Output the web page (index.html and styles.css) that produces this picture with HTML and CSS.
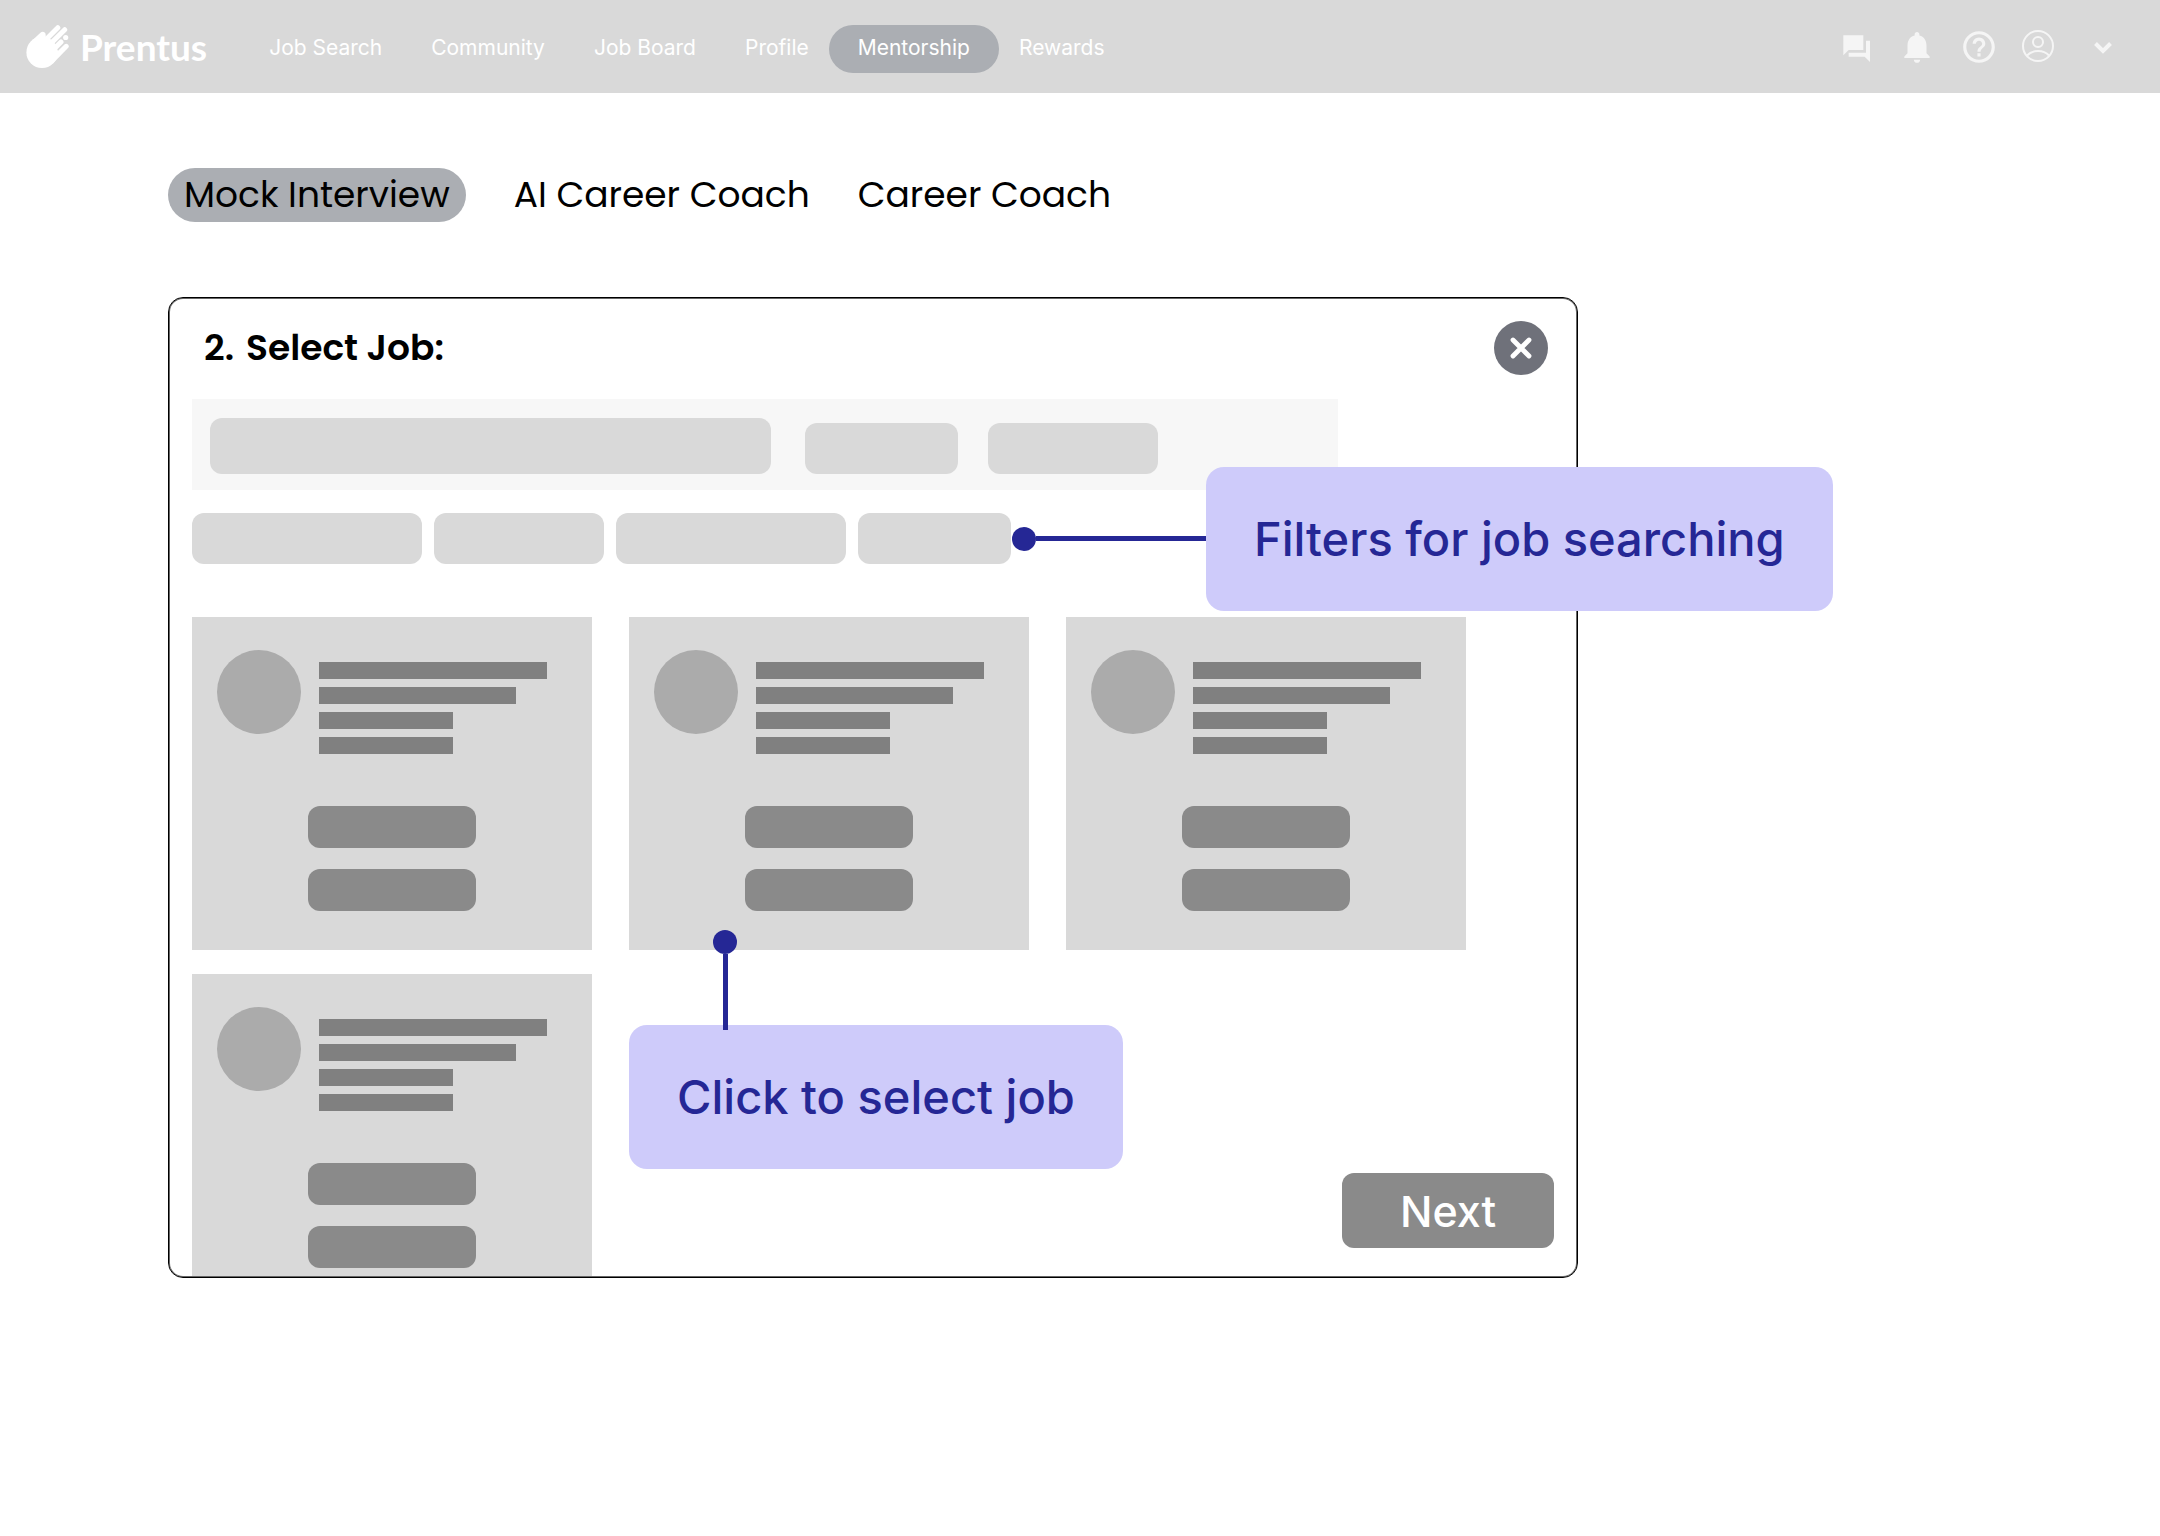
FILE: index.html
```html
<!DOCTYPE html>
<html lang="en">
<head>
<meta charset="utf-8">
<meta name="viewport" content="width=device-width, initial-scale=1">
<title>Prentus – Mentorship</title>
<link rel="stylesheet" href="styles.css">
</head>
<body>
<header class="topbar">
  <a class="brand" href="#">
    <svg class="brand-mark" viewBox="0 0 43 43" aria-hidden="true">
      <circle cx="16" cy="27.400" r="15.600"/>
      <path d="M5 16.400 14.700 7.600a3 3 0 0 1 5 2.200V13l7.300 7 6 7 8.700-4L27 38.400z"/>
      <path fill="none" stroke="#fff" stroke-linecap="round" stroke-width="5" d="M18 16.400 31.800 2.700M24 19.200 38.700 4.700M28 24l7-7M31 30.300l9.200-9"/>
      <circle cx="39.700" cy="12.500" r="2.600"/>
    </svg>
    <span>Prentus</span>
  </a>
  <nav class="mainnav" aria-label="Main">
    <a href="#">Job Search</a>
    <a href="#">Community</a>
    <a href="#">Job Board</a>
    <a href="#">Profile</a>
    <a class="is-current" href="#" aria-current="page">Mentorship</a>
    <a href="#">Rewards</a>
  </nav>
  <div class="tools">
    <button type="button" aria-label="Messages"><svg width="32" height="32" viewBox="1 1 24 24"><path d="M22 6h-3v9H6v3h12l4 4V6zm-5 7V2H2v15l4-4h11z"/></svg></button>
    <button type="button" aria-label="Notifications"><svg width="38" height="38" viewBox="0 0 24 24"><path d="M12 22c1.100 0 2-.9 2-2h-4c0 1.100.89 2 2 2zm6-6v-5c0-3.070-1.640-5.640-4.500-6.320V4c0-.83-.67-1.500-1.500-1.500s-1.500.67-1.500 1.500v.68C7.630 5.360 6 7.920 6 11v5l-2 2v1h16v-1l-2-2z"/></svg></button>
    <button type="button" aria-label="Help"><svg width="38" height="38" viewBox="0 0 24 24"><path d="M11 18h2v-2h-2v2zm1-16C6.480 2 2 6.480 2 12s4.480 10 10 10 10-4.480 10-10S17.520 2 12 2zm0 18c-4.410 0-8-3.590-8-8s3.590-8 8-8 8 3.590 8 8-3.590 8-8 8zm0-14c-2.210 0-4 1.790-4 4h2c0-1.100.9-2 2-2s2 .9 2 2c0 2-3 1.750-3 5h2c0-2.250 3-2.500 3-5 0-2.210-1.790-4-4-4z"/></svg></button>
    <button type="button" aria-label="Account"><svg width="32" height="38" viewBox="0 0 32 38"><g fill="none" stroke="#f5f5f5" stroke-width="2"><circle cx="16" cy="18" r="15"/><circle cx="16" cy="14" r="5"/><path d="M5 27.500c3-3.200 6.500-4.500 11-4.500s8 1.300 11 4.500"/></g></svg></button>
    <button class="tools-more" type="button" aria-label="Account menu"><svg width="18" height="38" viewBox="0 0 18 38"><path d="m1.500 15.500 7.500 7.500 7.500-7.500" fill="none" stroke="#f5f5f5" stroke-width="4"/></svg></button>
  </div>
</header>

<main class="page">
  <nav class="tabs" aria-label="Mentorship">
    <a class="is-current" href="#" aria-current="page">Mock Interview</a>
    <a href="#">AI Career Coach</a>
    <a href="#">Career Coach</a>
  </nav>

  <section class="panel" aria-labelledby="step-title">
    <div class="panel-head">
      <h1 id="step-title"><span>2.</span> <span>Select Job:</span></h1>
      <button class="close" type="button" aria-label="Close">
        <svg width="54" height="54" viewBox="0 0 54 54"><path d="m19 19 16 16m0-16-16 16" fill="none" stroke="#fff" stroke-width="4.800" stroke-linecap="round"/></svg>
      </button>
    </div>

    <form class="search">
      <input class="search-field" type="search" aria-label="Search jobs">
      <button class="search-option" type="button" aria-label="Location"></button>
      <button class="search-option search-option-wide" type="button" aria-label="Search"></button>
    </form>

    <div class="filters">
      <button class="filter filter-l" type="button" aria-label="Job type"></button>
      <button class="filter filter-m" type="button" aria-label="Level"></button>
      <button class="filter filter-l" type="button" aria-label="Date posted"></button>
      <button class="filter filter-s" type="button" aria-label="Salary"></button>
      <div class="callout callout-side">
        <span class="callout-dot"></span><span class="callout-line"></span>
        <p class="callout-text">Filters for job searching</p>
      </div>
    </div>

    <ul class="jobs">
      <li class="job">
        <div class="job-head"><span class="avatar"></span><div class="lines"><i class="line"></i><i class="line line-m"></i><i class="line line-s"></i><i class="line line-s"></i></div></div>
        <div class="job-actions"><button type="button" aria-label="Select job"></button><button type="button" aria-label="View job"></button></div>
      </li>
      <li class="job">
        <div class="job-head"><span class="avatar"></span><div class="lines"><i class="line"></i><i class="line line-m"></i><i class="line line-s"></i><i class="line line-s"></i></div></div>
        <div class="job-actions"><button type="button" aria-label="Select job"></button><button type="button" aria-label="View job"></button></div>
        <div class="callout callout-below">
          <span class="callout-dot"></span><span class="callout-line"></span>
          <p class="callout-text">Click to select job</p>
        </div>
      </li>
      <li class="job">
        <div class="job-head"><span class="avatar"></span><div class="lines"><i class="line"></i><i class="line line-m"></i><i class="line line-s"></i><i class="line line-s"></i></div></div>
        <div class="job-actions"><button type="button" aria-label="Select job"></button><button type="button" aria-label="View job"></button></div>
      </li>
      <li class="job">
        <div class="job-head"><span class="avatar"></span><div class="lines"><i class="line"></i><i class="line line-m"></i><i class="line line-s"></i><i class="line line-s"></i></div></div>
        <div class="job-actions"><button type="button" aria-label="Select job"></button><button type="button" aria-label="View job"></button></div>
      </li>
    </ul>

    <button class="next" type="button">Next</button>
  </section>
</main>
</body>
</html>
```
FILE: styles.css
```css
* {
  box-sizing: border-box;
}

body {
  margin: 0;
  background: #fff;
  color: #000;
  font-family: Inter, sans-serif;
}

button {
  padding: 0;
  border: 0;
  font: inherit;
  cursor: pointer;
}

a {
  color: inherit;
  text-decoration: none;
}

/* Top bar */
.topbar {
  display: flex;
  align-items: center;
  height: 93px;
  padding: 0 48px 0 26px;
  background: #d9d9d9;
  color: #fff;
}

.brand {
  display: flex;
  align-items: center;
  gap: 11px;
  font-family: Lato, sans-serif;
  font-size: 37px;
  font-weight: 700;
  line-height: 44px;
}

.brand-mark {
  width: 43px;
  height: 43px;
  fill: #fff;
}

.mainnav {
  display: flex;
  align-items: center;
  gap: 49px;
  margin-left: 62px;
  padding-top: 3px;
  font-size: 21px;
  line-height: 48px;
}

.mainnav .is-current {
  margin: 2px -29px 0;
  padding: 0 29px 2px;
  line-height: 46px;
  border-radius: 24px;
  background: #abaeb3;
}

.tools {
  display: flex;
  align-items: flex-end;
  gap: 24px;
  margin-left: auto;
}

.tools button {
  display: flex;
  background: none;
}

.tools svg {
  fill: #f5f5f5;
}

.tools .tools-more {
  margin-left: 16px;
}

/* Page */
.page {
  padding: 75px 168px 96px;
}

.tabs {
  display: flex;
  gap: 48px;
  font-family: Poppins, Inter, sans-serif;
  font-size: 36px;
  line-height: 54px;
}

.tabs .is-current {
  padding: 0 16px;
  border-radius: 27px;
  background: #abaeb3;
}

.tabs a + a {
  white-space: nowrap;
}

/* Panel */
.panel {
  position: relative;
  max-width: 1410px;
  margin-top: 75px;
  padding: 23px 23px 1px;
  border: 1px solid #000;
  border-radius: 15px;
  box-shadow: inset 0 0 0 1px #666;
}

.panel-head {
  display: flex;
  align-items: center;
  justify-content: space-between;
  padding: 0 6px 0 12px;
}

.panel-head h1 {
  display: flex;
  gap: 12px;
  margin: 0;
  font-family: Poppins, Inter, sans-serif;
  font-size: 36px;
  font-weight: 600;
  line-height: 54px;
}

.close {
  display: flex;
  border-radius: 50%;
  background: #6f717a;
}

.search {
  display: flex;
  align-items: flex-end;
  max-width: 1146px;
  margin-top: 24px;
  padding: 19px 18px 16px;
  background: #f7f7f7;
}

.search-field {
  width: 561px;
  height: 56px;
  margin-right: 34px;
  padding: 0 16px;
  border: 0;
  border-radius: 12px;
  background: #d9d9d9;
  font: inherit;
}

.search-option {
  width: 153px;
  height: 51px;
  margin-right: 30px;
  border-radius: 12px;
  background: #d9d9d9;
}

.search-option-wide {
  width: 170px;
}

.filters {
  position: relative;
  display: flex;
  gap: 12px;
  width: fit-content;
  margin-top: 23px;
}

.filter {
  height: 51px;
  border-radius: 12px;
  background: #d9d9d9;
}

.filter-l {
  width: 230px;
}

.filter-m {
  width: 170px;
}

.filter-s {
  width: 153px;
}

/* Job cards */
.jobs {
  display: grid;
  grid-template-columns: repeat(auto-fill, 400px);
  gap: 24px 37px;
  max-height: 659px;
  margin: 53px 0 0;
  padding: 0;
  overflow: hidden;
  list-style: none;
}

.job {
  position: relative;
  height: 333px;
  padding: 33px 25px;
  background: #d9d9d9;
}

.job-head {
  display: flex;
  gap: 18px;
}

.avatar {
  width: 84px;
  height: 84px;
  border-radius: 50%;
  background: #ababab;
}

.lines {
  display: grid;
  gap: 8px;
  padding-top: 12px;
}

.line {
  width: 228px;
  height: 17px;
  background: #808080;
}

.line-m {
  width: 197px;
}

.line-s {
  width: 134px;
}

.job-actions {
  display: grid;
  justify-content: center;
  gap: 21px;
  margin-top: 52px;
}

.job-actions button {
  width: 168px;
  height: 42px;
  border-radius: 12px;
  background: #8a8a8a;
}

.next {
  position: absolute;
  right: 23px;
  bottom: 29px;
  width: 212px;
  height: 75px;
  border-radius: 12px;
  background: #8a8a8a;
  color: #fff;
  font-size: 43px;
  font-weight: 500;
}

/* Callouts */
.callout {
  position: absolute;
  z-index: 1;
  display: flex;
}

.callout-text {
  margin: 0;
  padding: 36px 48px;
  border-radius: 18px;
  background: #cecbfa;
  color: #252795;
  font-size: 47px;
  font-weight: 500;
  line-height: 72px;
  white-space: nowrap;
}

.callout-dot {
  width: 24px;
  height: 24px;
  border-radius: 50%;
  background: #252795;
}

.callout-line {
  background: #252795;
}

.callout-side {
  top: 50%;
  left: calc(100% + 1px);
  align-items: center;
  transform: translateY(-50%);
}

.callout-side .callout-line {
  width: 170px;
  height: 5px;
}

.callout-below {
  top: calc(100% - 20px);
  left: 0;
  flex-direction: column;
}

.callout-below .callout-dot {
  margin-left: 84px;
}

.callout-below .callout-line {
  z-index: 1;
  width: 5px;
  height: 76px;
  margin: 0 0 -5px 94px;
}
```
